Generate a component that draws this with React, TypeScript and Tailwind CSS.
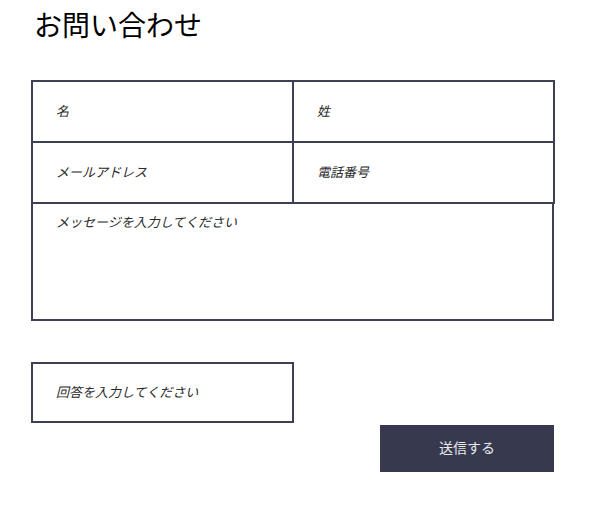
export default function App() {
  const font = { fontFamily: '"Liberation Serif", "Noto Sans CJK JP", serif' };
  const cell =
    'h-[61px] w-full border-r-2 border-b-2 border-[#3d3f55] bg-white pl-[23px] text-[13px] italic text-[#222] outline-none placeholder:text-[#2a2a2a]';

  return (
    <div className="min-h-[506px] bg-white px-[31px] pt-[8px]" style={font}>
      <h1 className="pl-[3px] text-[28px] font-normal leading-[38px] text-black">お問い合わせ</h1>

      <form className="mt-[34px] w-[524px]">
        <div className="grid grid-cols-2 border-t-2 border-l-2 border-[#3d3f55]">
          <input className={cell} placeholder="名" />
          <input className={cell} placeholder="姓" />
          <input className={cell} placeholder="メールアドレス" />
          <input className={cell} placeholder="電話番号" />
        </div>
        <textarea
          className="block h-[117px] w-[523px] resize-none border-x-2 border-b-2 border-[#3d3f55] bg-white pl-[23px] pt-[9px] text-[13px] italic text-[#222] outline-none placeholder:text-[#2a2a2a]"
          placeholder="メッセージを入力してください"
        />

        <input
          className="mt-[41px] block h-[61px] w-[263px] border-2 border-[#3d3f55] bg-white pl-[23px] text-[13px] italic text-[#222] outline-none placeholder:text-[#2a2a2a]"
          placeholder="回答を入力してください"
        />
        <div className="mt-[2px] flex w-[523px] justify-end">
          <button
            type="button"
            className="h-[47px] w-[174px] bg-[#373a4f] text-[14px] text-[#e8e8ee]"
          >
            送信する
          </button>
        </div>
      </form>
    </div>
  );
}
